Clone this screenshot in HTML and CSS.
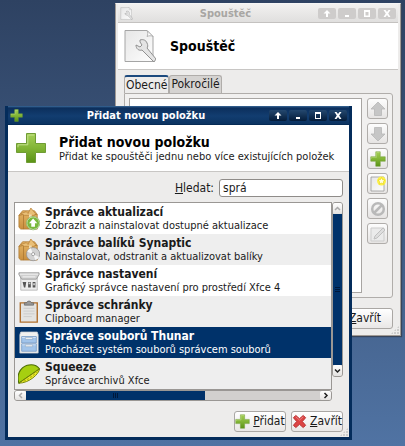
FILE: index.html
```html
<!DOCTYPE html>
<html lang="cs">
<head>
    <meta charset="UTF-8">
    <meta name="viewport" content="width=device-width, initial-scale=1.0">
    <title>Přidat novou položku</title>
    <link rel="stylesheet" href="styles.css">
</head>
<body>
    <!-- Shared icons -->
    <svg class="defs" aria-hidden="true">
        <defs>
            <linearGradient id="green" x1="0" y1="0" x2="0" y2="1">
                <stop offset="0" stop-color="#a5cf58"/>
                <stop offset="0.5" stop-color="#82b536"/>
                <stop offset="1" stop-color="#5a9216"/>
            </linearGradient>
            <linearGradient id="paper" x1="0" y1="0" x2="1" y2="1">
                <stop offset="0" stop-color="#e6e6e6"/>
                <stop offset="1" stop-color="#fdfdfd"/>
            </linearGradient>
            <linearGradient id="box" x1="0" y1="0" x2="0" y2="1">
                <stop offset="0" stop-color="#e5b566"/>
                <stop offset="1" stop-color="#c98f3f"/>
            </linearGradient>
            <symbol id="plus" viewBox="0 0 32 32">
                <path d="M11.5 1.5h9v10h10v9h-10v10h-9v-10h-10v-9h10z" fill="url(#green)" stroke="#6f9c34" stroke-width="1"/>
                <path d="M12.8 3v9.8H3v2.5M19.3 3h-6" fill="none" stroke="#c4e08a" stroke-width="1"/>
            </symbol>
            <symbol id="launcher" viewBox="0 0 32 34">
                <path d="M1 1.500h22l6 6v25H1z" fill="url(#paper)" stroke="#a5a5a5"/>
                <path d="M23 1.500c1 2 1 4 0 6 2-1 4-1 6 0z" fill="#fff" stroke="#a5a5a5" stroke-width=".8"/>
                <path d="M16 11c3-1 6 0 7 3 1 2 1 4 0 5l9 11-2 3-12-12c-3 1-6-1-6-5l4 2 2-2-2-3z" fill="#e4e4e4" stroke="#909090"/>
            </symbol>
            <symbol id="package" viewBox="0 0 24 24">
                <path d="M1 8l4-5h13l3 4v16H3l-2-2z" fill="url(#box)" stroke="#ad762d" stroke-width=".8"/>
                <path d="M1 8l5-1v16M6 7h15" fill="none" stroke="#a9752e" stroke-width=".8"/>
                <path d="M3 6l6-2 2 2 3-6 5 6-1 2H7z" fill="#e9bf77" stroke="#b9823a" stroke-width=".8"/>
                <path d="M12 7h3v5h-3z" fill="#f3ddb0"/>
            </symbol>
        </defs>
    </svg>

    <main class="desktop">
        <!-- Launcher properties -->
        <section class="window launcher-window">
            <header class="titlebar">
                <svg class="icon-small"><use href="#launcher"/></svg>
                <h1>Spouštěč</h1>
                <div class="window-buttons">
                    <button aria-label="Srolovat"><svg viewBox="0 0 12 9"><path d="M6 1L2.500 4.500H5V8h2V4.500h2.500z"/></svg></button>
                    <button aria-label="Minimalizovat"><svg viewBox="0 0 12 9"><path d="M4 6h4v2H4z"/></svg></button>
                    <button aria-label="Maximalizovat"><svg viewBox="0 0 12 9"><path fill-rule="evenodd" d="M3 1h6v7H3zM4.500 3v3.500h3V3z"/></svg></button>
                    <button aria-label="Zavřít okno"><svg viewBox="0 0 12 9"><path d="M2.500 1h2L6 3l1.500-2h2L7.200 4.500 9.500 8h-2L6 6 4.500 8h-2l2.300-3.500z"/></svg></button>
                </div>
            </header>
            <div class="banner">
                <svg class="icon-large"><use href="#launcher"/></svg>
                <h2>Spouštěč</h2>
            </div>
            <div class="launcher-body">
                <div class="tabs" role="tablist">
                    <button class="tab active" role="tab" aria-selected="true">Obecné</button>
                    <button class="tab" role="tab" aria-selected="false">Pokročilé</button>
                </div>
                <div class="tab-panel">
                    <div class="items"></div>
                    <div class="tools">
                        <button class="tool" aria-label="Nahoru" disabled><svg viewBox="0 0 16 16"><path d="M8 1L1 8h3.500v6.500h7V8H15z" fill="#c6c6c6" stroke="#b8b8b8" stroke-width=".8"/></svg></button>
                        <button class="tool" aria-label="Dolů" disabled><svg viewBox="0 0 16 16"><path d="M8 15l7-7h-3.500V1.500h-7V8H1z" fill="#c6c6c6" stroke="#b8b8b8" stroke-width=".8"/></svg></button>
                        <button class="tool" aria-label="Přidat položku"><svg><use href="#plus"/></svg></button>
                        <button class="tool" aria-label="Nová položka">
                            <svg viewBox="0 0 16 16">
                                <path d="M1 1h13v14H1z" fill="url(#paper)" stroke="#999" stroke-width=".8"/>
                                <circle cx="11.500" cy="5" r="4.500" fill="#fbf04c"/>
                                <path d="M11.500 1.500l1.100 2.200 2.400.3-1.700 1.800.4 2.400-2.200-1.100-2.200 1.100.4-2.400L8 4l2.400-.3z" fill="#fffde0" stroke="#e8d400" stroke-width=".6"/>
                            </svg>
                        </button>
                        <button class="tool" aria-label="Odstranit" disabled><svg viewBox="0 0 16 16"><circle cx="8" cy="8" r="5.800" fill="none" stroke="#b9b9b9" stroke-width="2.500"/><path d="M4 12l8-8" stroke="#b9b9b9" stroke-width="2.500"/></svg></button>
                        <button class="tool" aria-label="Upravit" disabled><svg viewBox="0 0 16 16"><path d="M1 2h13v13H1z" fill="#ebebeb" stroke="#cdcdcd"/><path d="M4 13l1-3 8-8 2 2-8 8z" fill="#dedede" stroke="#c0c0c0"/></svg></button>
                    </div>
                </div>
                <div class="launcher-actions">
                    <button class="button close-button"><span><u>Z</u>avřít</span></button>
                </div>
            </div>
            <div class="grip"></div>
        </section>

        <!-- Add new item -->
        <section class="window add-window">
            <header class="titlebar">
                <svg class="icon-small"><use href="#plus"/></svg>
                <h1>Přidat novou položku</h1>
                <div class="window-buttons">
                    <button aria-label="Srolovat"><svg viewBox="0 0 12 9"><path d="M6 1L2.500 4.500H5V8h2V4.500h2.500z"/></svg></button>
                    <button aria-label="Minimalizovat"><svg viewBox="0 0 12 9"><path d="M4 6h4v2H4z"/></svg></button>
                    <button aria-label="Maximalizovat"><svg viewBox="0 0 12 9"><path fill-rule="evenodd" d="M3 1h6v7H3zM4 3v4h4V3z"/></svg></button>
                    <button aria-label="Zavřít okno"><svg viewBox="0 0 12 9"><path d="M2.500 1h2L6 3l1.500-2h2L7.200 4.500 9.500 8h-2L6 6 4.500 8h-2l2.300-3.500z"/></svg></button>
                </div>
            </header>
            <div class="banner">
                <svg class="icon-large"><use href="#plus"/></svg>
                <div>
                    <h2>Přidat novou položku</h2>
                    <p>Přidat ke spouštěči jednu nebo více existujících položek</p>
                </div>
            </div>
            <div class="add-body">
                <div class="search">
                    <label for="search"><u>H</u>ledat:</label>
                    <input type="text" id="search" value="sprá">
                </div>

                <div class="scroller">
                    <ul class="results">
                        <li>
                            <svg viewBox="0 0 24 24"><use href="#package"/><circle cx="16.500" cy="16.500" r="7" fill="#79b83c" stroke="#fff"/><circle cx="16.500" cy="16.500" r="7.300" fill="none" stroke="#5c9a2a" stroke-width=".6"/><path d="M16.500 11.500l-4.500 5h2.500v4h4v-4H21z" fill="#fff"/></svg>
                            <div><strong>Správce aktualizací</strong><p>Zobrazit a nainstalovat dostupné aktualizace</p></div>
                        </li>
                        <li>
                            <svg viewBox="0 0 24 24"><use href="#package"/><circle cx="16.500" cy="16.500" r="7.200" fill="#d2d2d2" stroke="#8e8e8e" stroke-width=".8"/><path d="M16.500 16.500L10 13.500a7 7 0 0 1 4-3.500zM16.500 16.500l6.500 3a7 7 0 0 1-4 3.500z" fill="#f5f5f5"/><circle cx="16.500" cy="16.500" r="1.700" fill="#fff" stroke="#888" stroke-width=".8"/></svg>
                            <div><strong>Správce balíků Synaptic</strong><p>Nainstalovat, odstranit a aktualizovat balíky</p></div>
                        </li>
                        <li>
                            <svg viewBox="0 0 24 24">
                                <path d="M3 7h18v15H3z" fill="#ececec" stroke="#aaa" stroke-width=".8"/>
                                <path d="M1 3h22v2l-3 5H4L1 5z" fill="#cfcfcf" stroke="#8c8c8c" stroke-width=".8"/>
                                <path d="M2 4.500h20M5 7.500h14" stroke="#f7f7f7"/>
                                <path d="M5 13h4l-1 6H6.500zM11 13h3v6h-3zM16 13h3v6h-3z" fill="#555"/>
                                <path d="M11.500 13.500h2v2h-2zM16.500 14.500h2v2h-2z" fill="#ccc"/>
                            </svg>
                            <div><strong>Správce nastavení</strong><p>Grafický správce nastavení pro prostředí Xfce 4</p></div>
                        </li>
                        <li>
                            <svg viewBox="0 0 24 24">
                                <path d="M2.500 2h18.500v21H2.500z" fill="#e3e3e1" stroke="#b06f2c" stroke-width="1.500"/>
                                <path d="M6 8h12M6 11h12M6 14h12M6 17h9" stroke="#cacaca"/>
                                <path d="M7 4.500V2h2.500c0-2.500 5-2.500 5 0H17v2.500z" fill="#999" stroke="#666" stroke-width=".8"/>
                            </svg>
                            <div><strong>Správce schránky</strong><p>Clipboard manager</p></div>
                        </li>
                        <li class="selected">
                            <svg viewBox="0 0 24 24">
                                <path d="M3 0h18l1 3v20H2V3z" fill="#f1f1ef" stroke="#c9cdd2" stroke-width=".8"/>
                                <path d="M4 5h16v7H4zM4 13h16v8H4z" fill="#a2c4ea" stroke="#6e93bf" stroke-width=".8"/>
                                <path d="M4.500 6h15M4.500 14h15" stroke="#d5e5f8"/>
                                <path d="M8 6h8v2H8zM8 14h8v2H8z" fill="#f4f4f4" stroke="#7a95b5" stroke-width=".5"/>
                            </svg>
                            <div><strong>Správce souborů Thunar</strong><p>Procházet systém souborů správcem souborů</p></div>
                        </li>
                        <li>
                            <svg viewBox="0 0 24 24">
                                <path d="M1 22C-2 14 2 5 10 2.500c6-1.500 11 .5 13.500 4z" fill="#a6cf10" stroke="#4b6b05" stroke-width="1.200"/>
                                <path d="M1 22L23.500 6.500C23 12 12 22 1 22z" fill="#f4ec35" stroke="#6b8005"/>
                                <path d="M6 20c5-2 12-7 15-11" fill="none" stroke="#b8c40d" stroke-width="1.500" stroke-dasharray="3 1"/>
                            </svg>
                            <div><strong>Squeeze</strong><p>Správce archivů Xfce</p></div>
                        </li>
                    </ul>
                    <div class="scrollbar vertical">
                        <button aria-label="Posunout nahoru" disabled><svg viewBox="0 0 9 9"><path d="M2 6l2.500-2.500L7 6"/></svg></button>
                        <div class="thumb"></div>
                        <button aria-label="Posunout dolů"><svg viewBox="0 0 9 9"><path d="M2 3.500L4.500 6 7 3.500"/></svg></button>
                    </div>
                    <div class="scrollbar horizontal">
                        <button aria-label="Posunout vlevo" disabled><svg viewBox="0 0 9 9"><path d="M6 2L3.500 4.500 6 7"/></svg></button>
                        <div class="track"><div class="thumb"></div></div>
                        <button aria-label="Posunout vpravo"><svg viewBox="0 0 9 9"><path d="M3.500 2L6 4.500 3.500 7"/></svg></button>
                    </div>
                </div>

                <div class="actions">
                    <button class="button"><svg><use href="#plus"/></svg><span><u>P</u>řidat</span></button>
                    <button class="button">
                        <svg viewBox="0 0 16 16"><path d="M4 1.500l4 3.500 4-3.500L14.500 4 11 8l3.500 4-2.500 2.500L8 11l-4 3.500L1.500 12 5 8 1.500 4z" fill="#dc4444" stroke="#b52a2a" stroke-linejoin="round"/><path d="M4 3l4 3.500L12 3" fill="none" stroke="#f09090" stroke-width=".8"/></svg>
                        <span><u>Z</u>avřít</span>
                    </button>
                </div>
            </div>
            <div class="grip"></div>
        </section>
    </main>
</body>
</html>
```
FILE: styles.css
```css
* {
    box-sizing: border-box;
}
body {
    margin: 0;
    font-family: "DejaVu Sans Condensed", "DejaVu Sans", sans-serif;
    font-size: 11px;
    line-height: 13px;
    color: #1a1a1a;
}
h1, h2, p, ul {
    margin: 0;
    padding: 0;
}
button, input {
    font: inherit;
    color: inherit;
    margin: 0;
    padding: 0;
}
svg {
    display: block;
    flex: none;
}
.defs {
    position: absolute;
    width: 0;
    height: 0;
}
.desktop {
    position: relative;
    min-height: 100vh;
    overflow: hidden;
    background: linear-gradient(#2e4262, #5073a3);
}

/* Windows */
.window {
    position: absolute;
    background: #edeceb;
}
.launcher-window {
    top: 3px;
    left: 115px;
    right: 4px;
    border: 1px solid #a09a95;
    border-top-color: #f5f5f5;
    padding: 0 2px 2px;
    box-shadow: 1px 1px 1px #38455a;
}
.add-window {
    top: 106px;
    left: 5px;
    right: 53px;
    border: 3px solid #042c5b;
    border-top: 0;
}
.titlebar {
    display: flex;
    align-items: center;
    height: 19px;
    padding: 0 2px;
    background: linear-gradient(#f2f1f0, #e0dfde);
    border-bottom: 1px solid #c4c2c0;
    color: #a8a6a3;
}
.titlebar h1 {
    flex: 1;
    text-align: center;
    font-size: 11px;
    font-weight: bold;
}
.add-window .titlebar {
    background: linear-gradient(#3b6a9a 0, #0c2f5c 2px, #123d70 10px, #0b3361);
    border-bottom-color: #052a55;
    color: #fff;
}
.icon-small {
    width: 13px;
    height: 13px;
}
.window-buttons {
    display: flex;
    gap: 2px;
}
.window-buttons button {
    display: flex;
    align-items: center;
    justify-content: center;
    width: 18px;
    height: 11px;
    border: 0;
    border-radius: 2px;
    background: #cecccb;
}
.window-buttons svg {
    width: 12px;
    height: 9px;
    fill: #fff;
}
.add-window .window-buttons button {
    background: linear-gradient(#24486f, #041c3a);
}
.banner {
    display: flex;
    align-items: center;
    height: 47px;
    background: #fff;
    border-bottom: 1px solid #c8c6c4;
}
.banner h2 {
    font-size: 14px;
    line-height: 16px;
    font-weight: bold;
    color: #000;
}
.banner p {
    white-space: nowrap;
}
.icon-large {
    width: 32px;
    height: 34px;
}
.launcher-window .banner {
    gap: 14px;
    padding-left: 6px;
}
.add-window .banner {
    gap: 12px;
    padding-left: 7px;
}

/* Launcher window */
.launcher-body {
    padding: 5px 5px 4px 6px;
}
.tabs {
    display: flex;
}
.tab {
    height: 18px;
    padding: 0 1px;
    border: 1px solid #b0adaa;
    border-bottom: 0;
    border-radius: 3px 3px 0 0;
    background: #d5d3d1;
    font-size: 12px;
}
.tab.active {
    border-top: 2px solid #1c4a7e;
    background: #edeceb;
}
.tab-panel {
    display: flex;
    gap: 5px;
    padding: 4px;
    border: 1px solid #b0adaa;
    border-radius: 0 3px 3px 3px;
    background: #f1f0ef;
}
.items {
    flex: 1;
    min-height: 195px;
    border: 1px solid #a8a5a2;
    background: #fff;
}
.tools {
    display: flex;
    flex-direction: column;
    gap: 4px;
}
.tool {
    display: flex;
    align-items: center;
    justify-content: center;
    width: 21px;
    height: 21px;
    border: 1px solid #b0adaa;
    border-radius: 3px;
    background: linear-gradient(#fdfdfd, #e6e4e3);
}
.tool svg {
    width: 16px;
    height: 16px;
}
.launcher-actions {
    display: flex;
    justify-content: flex-end;
    padding-top: 10px;
}
.button {
    display: flex;
    align-items: center;
    justify-content: center;
    gap: 3px;
    width: 52px;
    height: 21px;
    border: 1px solid #aaa7a4;
    border-radius: 3px;
    background: linear-gradient(#fff, #e9e7e6);
    font-size: 12px;
    white-space: nowrap;
}
.button svg {
    width: 15px;
    height: 15px;
}
.close-button {
    width: 56px;
}
.grip {
    position: absolute;
    right: 1px;
    bottom: 1px;
    width: 8px;
    height: 8px;
    background: radial-gradient(circle at 1px 1px, #ccc 1px, transparent 1px) 0 0 / 3px 3px;
    clip-path: polygon(100% 0, 100% 100%, 0 100%);
}

/* Add window */
.add-body {
    padding: 7px 6px 5px;
}
.search {
    display: flex;
    align-items: center;
    justify-content: flex-end;
    gap: 5px;
    font-size: 12px;
}
.search input {
    width: 124px;
    height: 18px;
    padding: 0 3px;
    border: 1px solid #8f8c89;
    border-radius: 3px;
    background: #fff;
}
.scroller {
    display: grid;
    grid-template-columns: minmax(0, 1fr) 11px;
    padding: 5px 0 10px;
}
.results {
    list-style: none;
    border: 1px solid #9a9794;
    background: #fff;
}
.results li {
    display: flex;
    align-items: center;
    gap: 5px;
    height: 31px;
    padding-left: 3px;
    white-space: nowrap;
}
.results li:nth-child(even), .results li:last-child {
    background: #eeeeee;
}
.results li.selected {
    background: #00326a;
    color: #fff;
}
.results svg {
    width: 22px;
    height: 24px;
}
.results strong {
    display: block;
    font-size: 12px;
    line-height: 14px;
}
.scrollbar {
    display: flex;
    border: 1px solid #9a9794;
    border-radius: 3px;
    background: #d2d0ce;
}
.scrollbar button {
    display: flex;
    align-items: center;
    justify-content: center;
    flex: none;
    border: 0;
    border-radius: 2px;
    background: linear-gradient(#fff, #e4e2e0);
}
.scrollbar svg {
    width: 9px;
    height: 9px;
    fill: none;
    stroke: #222;
    stroke-width: 1.5;
}
.scrollbar button:disabled svg {
    stroke: #aaa;
}
.thumb {
    display: flex;
    align-items: center;
    justify-content: center;
    background: #00326a;
}
/* ridges in the middle of the thumb */
.thumb::after {
    content: "";
    width: 5px;
    height: 5px;
    background: repeating-linear-gradient(var(--ridge, 90deg), #00183a 0 1px, transparent 1px 2px);
}
.vertical {
    --ridge: 180deg;
    flex-direction: column;
    margin-bottom: 13px;
}
.vertical button {
    height: 11px;
}
.vertical .thumb {
    flex: 1;
}
.horizontal {
    height: 11px;
}
.horizontal button {
    width: 11px;
}
.track {
    flex: 1;
    display: flex;
}
.track .thumb {
    width: 61%;
}
.actions {
    display: flex;
    justify-content: flex-end;
    gap: 5px;
}
```
